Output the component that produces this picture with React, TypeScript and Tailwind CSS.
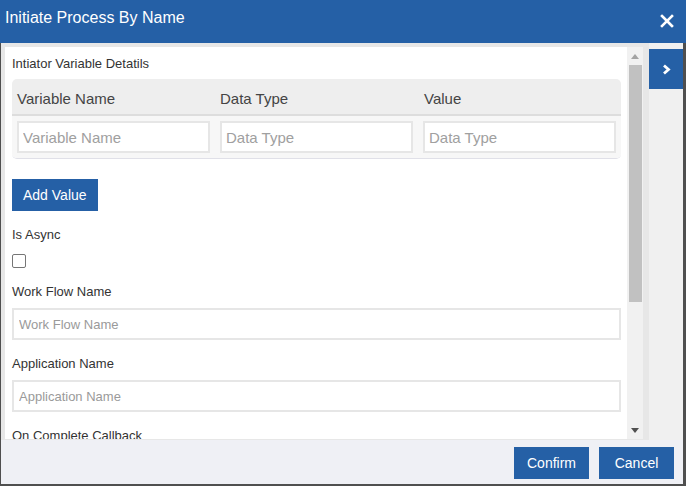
import React from "react";

const font = { fontFamily: '"Liberation Sans", Arial, sans-serif' };

function Field({ label, placeholder }: { label: string; placeholder: string }) {
  return (
    <div className="flex flex-col">
      <div className="text-[13px] leading-[18px] text-[#333] mt-[15px]">{label}</div>
      <input
        className="mt-[7px] h-[32px] w-full border-2 border-[#e6e6e6] bg-white px-[5px] text-[13px] text-[#333] placeholder:text-[#9a9a9a] outline-none"
        placeholder={placeholder}
        readOnly
      />
    </div>
  );
}

export default function App() {
  return (
    <div className="w-[686px] h-[486px] bg-[#4f4f4f] flex flex-col overflow-hidden" style={font}>
      {/* Header */}
      <div className="h-[43px] w-full bg-[#2560a6] flex items-center justify-between pl-[5px] pr-[12px] shrink-0">
        <span className="text-white text-[16px] leading-none -mt-[8px]">Initiate Process By Name</span>
        <svg width="14" height="14" viewBox="0 0 14 14" className="-mt-[2px]">
          <path d="M2 2 L12 12 M12 2 L2 12" stroke="white" strokeWidth="2.6" strokeLinecap="square" />
        </svg>
      </div>
      <div className="flex-1 flex flex-col pl-[1px] pr-[3px] pb-[2px]">
        {/* Body */}
        <div className="h-[397px] bg-[#e7e7e7] flex flex-row shrink-0">
          <div className="ml-[4px] mt-[4px] mb-[1px] flex flex-row">
            <div className="w-[622px] bg-white overflow-hidden pl-[7px] pr-[6px] pt-[8px]">
              <div className="text-[13px] leading-[18px] text-[#333]">Intiator Variable Detatils</div>
              <div className="mt-[6px] rounded-[5px] overflow-hidden border-b border-[#e0e0e8]">
                <div className="grid grid-cols-3 h-[37px] bg-[#eeeeee] border-b-2 border-[#dddddd] text-[15px] text-[#444]">
                  <div className="pl-[5px] pt-[11px] leading-[17px]">Variable Name</div>
                  <div className="pl-[5px] pt-[11px] leading-[17px]">Data Type</div>
                  <div className="pl-[6px] pt-[11px] leading-[17px]">Value</div>
                </div>
                <div className="grid grid-cols-3 bg-[#f7f7f7]">
                  {["Variable Name", "Data Type", "Data Type"].map((p, i) => (
                    <div key={i} className="p-[5px]">
                      <input
                        className="h-[32px] w-full border-2 border-[#e6e6e6] bg-white px-[4px] text-[15px] text-[#333] placeholder:text-[#a0a0a0] outline-none"
                        placeholder={p}
                        readOnly
                      />
                    </div>
                  ))}
                </div>
              </div>
              <button className="mt-[20px] h-[32px] px-[11px] bg-[#2560a6] text-white text-[14px]">Add Value</button>
              <div className="text-[13px] leading-[18px] text-[#333] mt-[15px]">Is Async</div>
              <div className="mt-[10px] w-[14px] h-[14px] border border-[#767676] rounded-[2px] bg-white" />
              <Field label="Work Flow Name" placeholder="Work Flow Name" />
              <Field label="Application Name" placeholder="Application Name" />
              <div className="text-[13px] leading-[18px] text-[#333] mt-[15px]">On Complete Callback</div>
            </div>
            {/* Scrollbar */}
            <div className="w-[16px] bg-[#f1f1f1] flex flex-col items-center">
              <div className="h-[18px] flex items-center justify-center">
                <svg width="8" height="5" viewBox="0 0 8 5"><path d="M0 5 L4 0 L8 5 Z" fill="#a3a3a3" /></svg>
              </div>
              <div className="w-[13px] h-[237px] bg-[#c1c1c1] ml-[1px]" />
              <div className="flex-1" />
              <div className="h-[17px] flex items-center justify-center">
                <svg width="8" height="5" viewBox="0 0 8 5"><path d="M0 0 L8 0 L4 5 Z" fill="#505050" /></svg>
              </div>
            </div>
          </div>
          <div className="ml-[6px] w-[34px] bg-[#f0f0f0] flex flex-col">
            <div className="mt-[6px] h-[40px] bg-[#2560a6] flex items-center justify-center">
              <svg width="9" height="11" viewBox="0 0 9 11">
                <path d="M2 1.5 L6.5 5.5 L2 9.5" stroke="white" strokeWidth="2.8" fill="none" />
              </svg>
            </div>
          </div>
        </div>
        {/* Footer */}
        <div className="flex-1 bg-[#eff0f5] flex flex-row justify-end items-start pt-[7px] pr-[9px] gap-[10px]">
          <button className="h-[32px] w-[75px] bg-[#2560a6] text-white text-[14px]">Confirm</button>
          <button className="h-[32px] w-[75px] bg-[#2560a6] text-white text-[14px]">Cancel</button>
        </div>
      </div>
    </div>
  );
}
